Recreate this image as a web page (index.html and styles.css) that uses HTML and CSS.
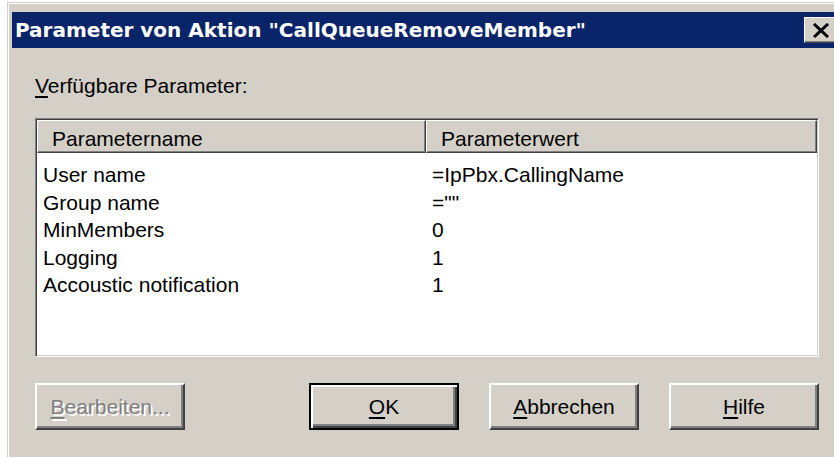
FILE: index.html
```html
<!DOCTYPE html>
<html lang="de">
<head>
<meta charset="utf-8">
<title>Parameter von Aktion</title>
<link rel="stylesheet" href="styles.css">
</head>
<body>
<div class="window">
  <div class="titlebar">
    <span class="title">Parameter von Aktion "CallQueueRemoveMember"</span>
    <span class="close" aria-label="Schließen">
      <svg width="18" height="15" viewBox="0 0 18 15"><path d="M2 1 L16 14 M16 1 L2 14" stroke="#000" stroke-width="3" fill="none"/></svg>
    </span>
  </div>
  <div class="dialog">
    <div class="label"><u>V</u>erfügbare Parameter:</div>
    <div class="list">
      <div class="list-head">
        <div class="head-cell">Parametername</div>
        <div class="head-cell">Parameterwert</div>
      </div>
      <div class="list-body">
        <div class="row"><span>User name</span><span>=IpPbx.CallingName</span></div>
        <div class="row"><span>Group name</span><span>=""</span></div>
        <div class="row"><span>MinMembers</span><span>0</span></div>
        <div class="row"><span>Logging</span><span>1</span></div>
        <div class="row"><span>Accoustic notification</span><span>1</span></div>
      </div>
    </div>
    <div class="buttons">
      <button class="btn disabled" type="button"><u>B</u>earbeiten...</button>
      <div class="btn-group">
        <button class="btn default" type="button"><u>O</u>K</button>
        <button class="btn" type="button"><u>A</u>bbrechen</button>
        <button class="btn" type="button"><u>H</u>ilfe</button>
      </div>
    </div>
  </div>
</div>
</body>
</html>
```
FILE: styles.css
```css
html, body {
  margin: 0;
  overflow: hidden;
  background: #fff;
}

body {
  font-family: "Liberation Sans", Arial, sans-serif;
  color: #000;
}

/* classic window frame */
.window {
  box-sizing: border-box;
  width: 836px;
  height: 455px;
  margin: 2px 0 0 7px;
  padding: 9px 0 0 4px;
  background: #d4d0c8;
  border-top: 1px solid #d4d0c8;
  border-left: 1px solid #d4d0c8;
  box-shadow: inset 1px 1px #fff;
}

.titlebar {
  height: 36px;
  display: flex;
  align-items: center;
  padding-left: 3px;
  background: #0a246a;
}

.title {
  color: #fff;
  font-family: "DejaVu Sans", Verdana, sans-serif;
  font-weight: bold;
  font-size: 20px;
  white-space: nowrap;
}

.close {
  margin-left: auto;
  margin-right: 5px;
  box-sizing: border-box;
  width: 34px;
  height: 26px;
  display: flex;
  align-items: center;
  justify-content: center;
  background: #d4d0c8;
  border: 1px solid;
  border-color: #fff #404040 #404040 #fff;
  box-shadow: inset -1px -1px #808080;
}

.dialog {
  padding: 26px 0 0 23px;
}

.label {
  font-size: 21px;
  line-height: 24px;
}

u {
  text-decoration-thickness: 2px;
  text-underline-offset: 3px;
}

/* sunken list view */
.list {
  box-sizing: border-box;
  margin-top: 20px;
  width: 784px;
  height: 239px;
  padding: 1px;
  background: #fff;
  border: 1px solid;
  border-color: #808080 #fff #fff #808080;
  box-shadow: inset 1px 1px #404040, inset -1px -1px #d4d0c8;
}

.list-head {
  display: grid;
  grid-template-columns: 389px 1fr;
  height: 33px;
}

.head-cell {
  box-sizing: border-box;
  padding: 4px 0 0 14px;
  font-size: 21px;
  line-height: 27px;
  background: #d4d0c8;
  border-top: 1px solid #fff;
  border-left: 1px solid #fff;
  border-right: 1px solid #404040;
  border-bottom: 1px solid #404040;
  box-shadow: inset -1px -1px #808080;
}

.list-body {
  padding-top: 8px;
}

.row {
  display: grid;
  grid-template-columns: 389px 1fr;
  height: 27.5px;
  font-size: 21px;
  line-height: 27.5px;
}

.row span {
  padding-left: 6px;
  white-space: nowrap;
}

/* push buttons */
.buttons {
  display: flex;
  justify-content: space-between;
  width: 784px;
  margin-top: 26px;
}

.btn-group {
  display: flex;
  gap: 30px;
}

.btn {
  box-sizing: border-box;
  width: 150px;
  height: 47px;
  padding: 0;
  font-family: "Liberation Sans", Arial, sans-serif;
  font-size: 21px;
  color: #000;
  background: #d4d0c8;
  border: 2px solid;
  border-color: #fff #404040 #404040 #fff;
  box-shadow: inset -2px -2px #808080;
}

.btn.default {
  border: 2px solid #000;
  box-shadow: inset 2px 2px #fff, inset -2px -2px #404040, inset -4px -4px #808080;
}

.btn.disabled {
  color: #808080;
  text-shadow: 2px 2px #fff;
}
```
